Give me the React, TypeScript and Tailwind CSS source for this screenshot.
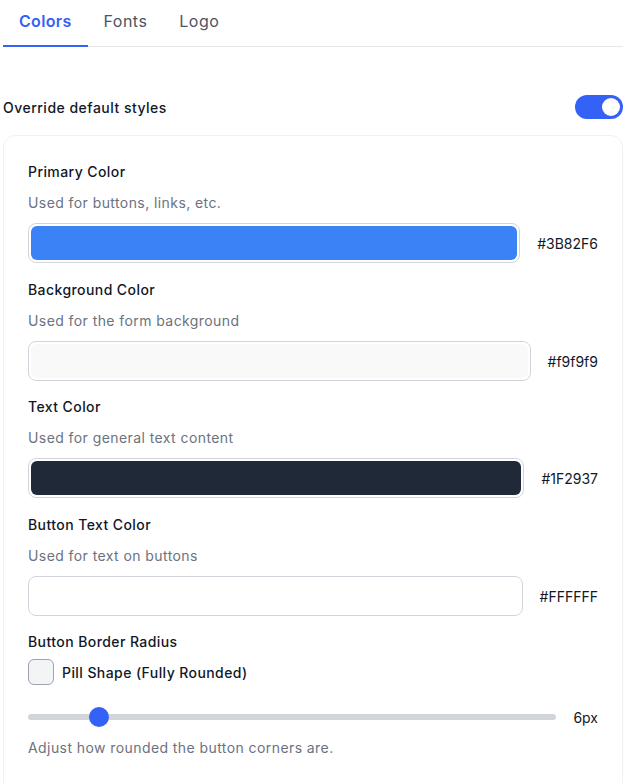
import React from "react";

const font = { fontFamily: "Inter, 'Noto Sans', sans-serif" };

function ColorField({
  label,
  desc,
  color,
  hex,
}: {
  label: string;
  desc: string;
  color: string;
  hex: string;
}) {
  return (
    <div className="mb-[17px]">
      <div className="text-[14px] leading-5 font-medium tracking-[0.03em] text-[#111827]">{label}</div>
      <div className="mt-[11px] text-[14px] leading-5 tracking-[0.03em] text-[#6b7280]">{desc}</div>
      <div className="mt-[10px] flex items-center gap-[17px]">
        <div className="flex-1 h-10 rounded-lg border border-[#d1d5db] bg-white p-[2px]">
          <div className="h-full w-full rounded-md" style={{ backgroundColor: color }} />
        </div>
        <div className="text-[14px] text-[#111827]">{hex}</div>
      </div>
    </div>
  );
}

export default function App() {
  const value = 6;
  const max = 50;
  return (
    <div className="min-h-[783px] bg-white pl-[3px] pr-[7px]" style={font}>
      <div className="flex border-b border-[#e5e7eb]">
        <div className="-mb-px px-4 pt-[9px] pb-[12px] border-b-2 border-[#3461f6] text-[16px] leading-6 font-semibold tracking-[0.02em] text-[#3461f6]">
          Colors
        </div>
        <div className="-mb-px px-4 pt-[9px] pb-[12px] border-b-2 border-transparent text-[16px] leading-6 tracking-[0.03em] text-[#4b5563]">
          Fonts
        </div>
        <div className="-mb-px px-4 pt-[9px] pb-[12px] border-b-2 border-transparent text-[16px] leading-6 tracking-[0.03em] text-[#4b5563]">
          Logo
        </div>
      </div>

      <div className="mt-[48px] flex items-center justify-between">
        <div className="text-[14px] font-medium tracking-[0.035em] text-[#111827]">Override default styles</div>
        <div className="relative h-6 w-12 rounded-full bg-[#3461f6]">
          <div className="absolute right-[3px] top-[3px] h-[18px] w-[18px] rounded-full bg-white" />
        </div>
      </div>

      <div className="mt-4 rounded-xl border border-[#f0f1f3] px-6 pt-[26px] pb-10">
        <ColorField label="Primary Color" desc="Used for buttons, links, etc." color="#3B82F6" hex="#3B82F6" />
        <ColorField label="Background Color" desc="Used for the form background" color="#f9f9f9" hex="#f9f9f9" />
        <div className="-mt-px" />
        <ColorField label="Text Color" desc="Used for general text content" color="#1F2937" hex="#1F2937" />
        <ColorField label="Button Text Color" desc="Used for text on buttons" color="#FFFFFF" hex="#FFFFFF" />

        <div className="-mt-px text-[14px] leading-5 font-medium tracking-[0.03em] text-[#111827]">Button Border Radius</div>
        <div className="mt-[7px] flex items-center gap-2">
          <div className="h-[26px] w-[26px] rounded-md border border-[#9ca3af] bg-[#f3f4f6]" />
          <div className="text-[14px] font-medium tracking-[0.03em] text-[#111827]">Pill Shape (Fully Rounded)</div>
        </div>
        <div className="mt-[22px] flex h-5 items-center gap-[17px]">
          <div className="relative h-[6px] flex-1 rounded-full bg-[#d1d5db]">
            <div
              className="absolute top-1/2 h-5 w-5 -translate-y-1/2 rounded-full bg-[#3461f6]"
              style={{ left: `calc(${(value / max) * 100}% - 2px)` }}
            />
          </div>
          <div className="text-[14px] text-[#111827]">{value}px</div>
        </div>
        <div className="mt-[11px] text-[14px] leading-5 tracking-[0.03em] text-[#6b7280]">
          Adjust how rounded the button corners are.
        </div>
      </div>
    </div>
  );
}
